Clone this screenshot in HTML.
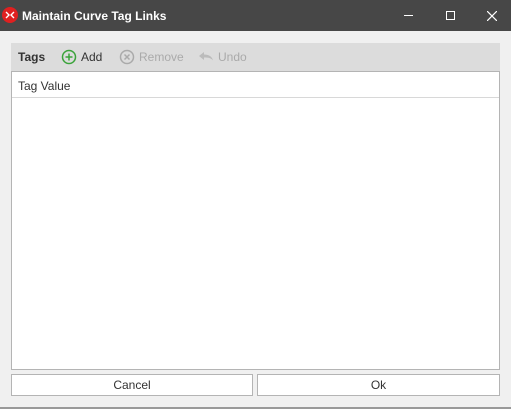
<!DOCTYPE html>
<html><head><style>
*{margin:0;padding:0;box-sizing:border-box}
body{width:511px;height:409px;background:#f0f0f0;font-family:"Liberation Sans",sans-serif;font-size:12px;position:relative;overflow:hidden}
.title{position:absolute;left:0;top:0;width:511px;height:31px;background:#474747;color:#fff;font-weight:bold;font-size:12px}
.abs{position:absolute}
.tb{left:11px;top:43px;width:489px;height:28px;background:#dcdcdc}
.grid{left:11px;top:71px;width:489px;height:299px;background:#fff;border:1px solid #b4b4b4}
.btn{top:374px;height:22px;border:1px solid #b4b4b4;background:#fff;text-align:center;line-height:20px;color:#333}
</style></head><body>
<div class="title">
<svg class="abs" style="left:2px;top:7px" width="16" height="16"><circle cx="8" cy="8" r="8" fill="#e02020"/><path d="M4 5l3 3-3 3M12 5l-3 3 3 3" stroke="#fff" stroke-width="1.4" fill="none"/></svg>
<div class="abs" style="left:22px;top:9px">Maintain Curve Tag Links</div>
<div class="abs" style="left:404px;top:15px;width:9px;height:1px;background:#fff"></div>
<div class="abs" style="left:446px;top:11px;width:9px;height:9px;border:1px solid #fff"></div>
<svg class="abs" style="left:487px;top:11px" width="10" height="10"><path d="M0 0L10 10M10 0L0 10" stroke="#fff" stroke-width="1.2"/></svg>
</div>
<div class="abs tb">
<div class="abs" style="left:7px;top:7px;font-weight:bold;color:#333">Tags</div>
<svg class="abs" style="left:50px;top:6px" width="16" height="16"><circle cx="8" cy="8" r="6.5" fill="none" stroke="#3aa33a" stroke-width="1.5"/><path d="M8 4.5v7M4.5 8h7" stroke="#3aa33a" stroke-width="1.5"/></svg>
<div class="abs" style="left:70px;top:7px;color:#333">Add</div>
<svg class="abs" style="left:108px;top:6px" width="16" height="16"><circle cx="8" cy="8" r="6.5" fill="none" stroke="#aaa" stroke-width="1.5"/><path d="M5.5 5.5l5 5M10.5 5.5l-5 5" stroke="#aaa" stroke-width="1.5"/></svg>
<div class="abs" style="left:128px;top:7px;color:#aaa">Remove</div>
<svg class="abs" style="left:187px;top:8px" width="16" height="12"><path d="M1 5l5-4v2.5c5 0 8 2 9 6-2-2.5-4-3-9-3V9z" fill="#bbb"/></svg>
<div class="abs" style="left:207px;top:7px;color:#aaa">Undo</div>
</div>
<div class="abs grid">
<div style="height:26px;border-bottom:1px solid #d8d8d8;padding:7px 0 0 6px;color:#333">Tag Value</div>
</div>
<div class="abs btn" style="left:11px;width:242px">Cancel</div>
<div class="abs btn" style="left:257px;width:243px">Ok</div>
<div class="abs" style="left:0;top:407px;width:511px;height:2px;background:#999"></div>
</body></html>
